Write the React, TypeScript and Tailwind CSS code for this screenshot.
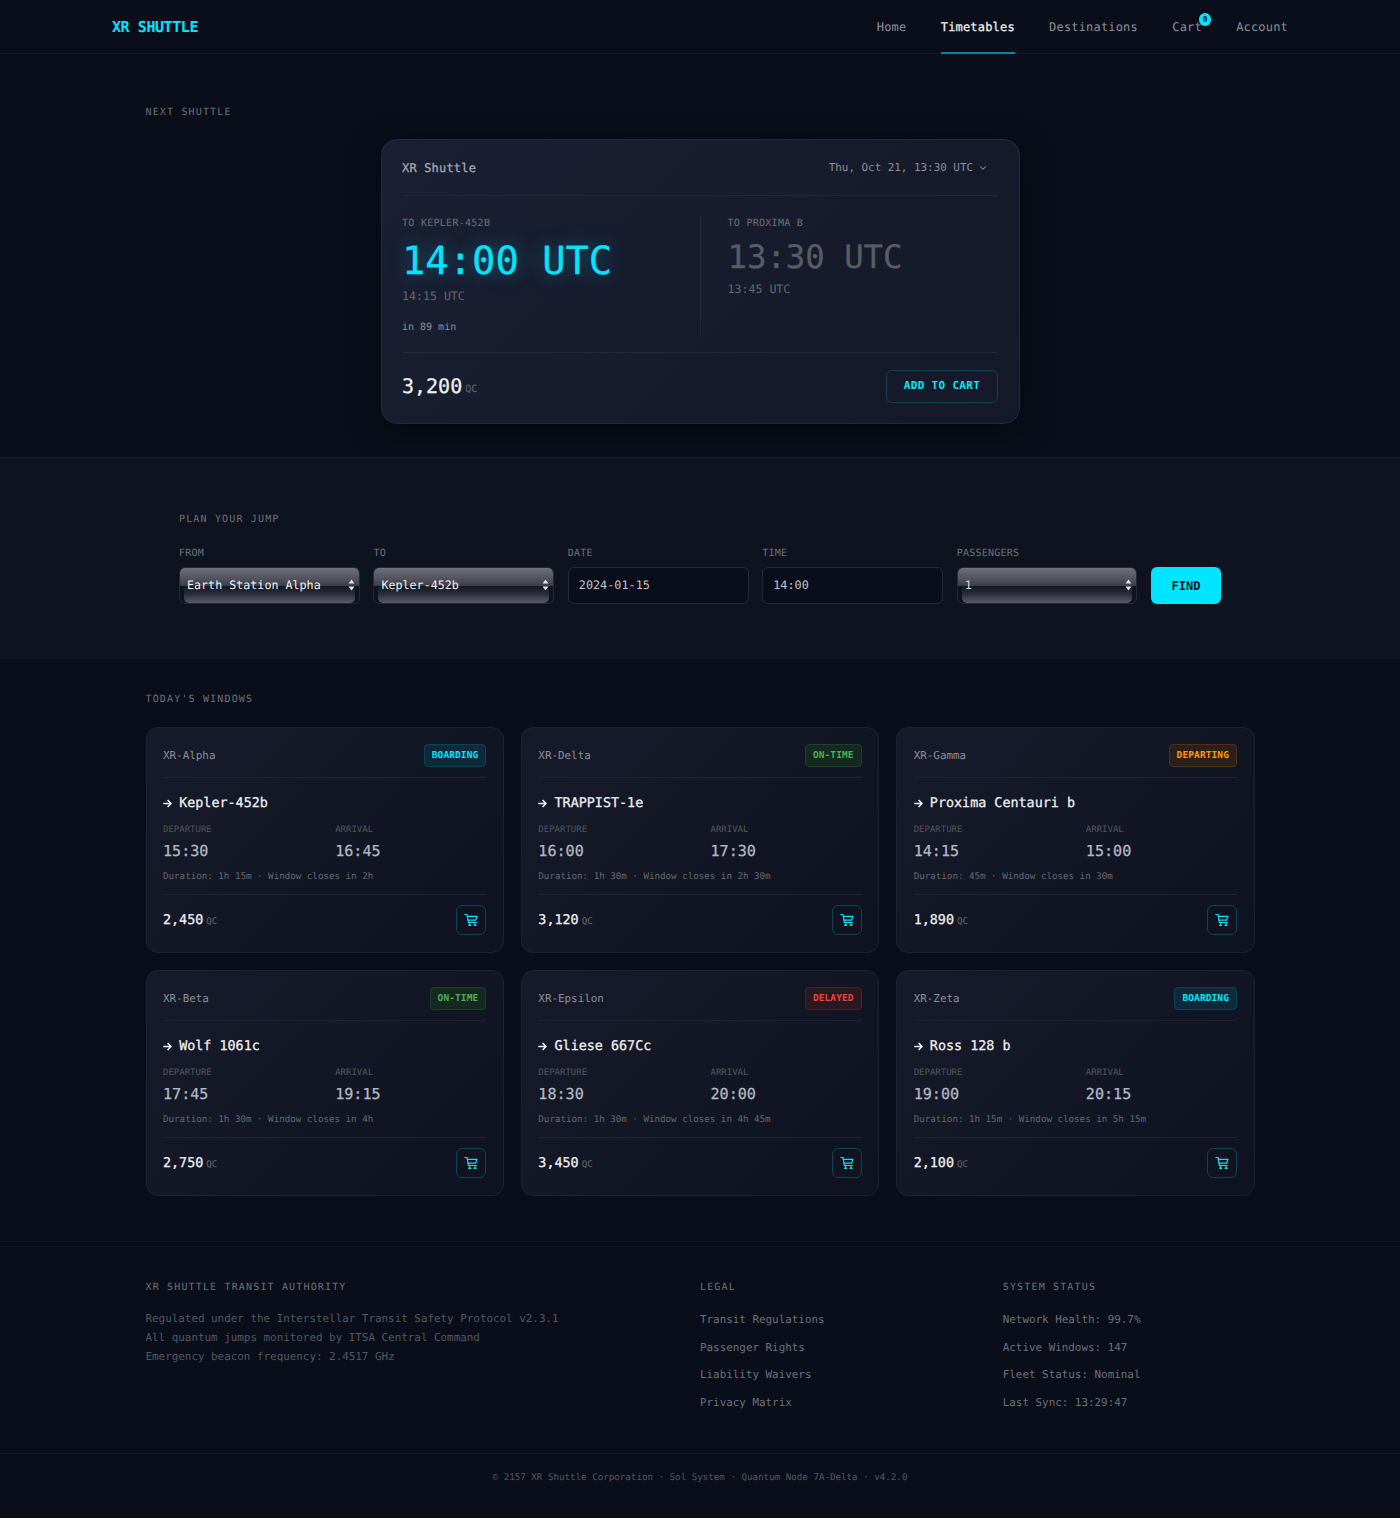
import React from "react";
import { ChevronDown } from "lucide-react";

const FONT = "font-['DejaVu_Sans_Mono',monospace] [text-rendering:geometricPrecision]";
const MEDIUM = "[-webkit-text-stroke:0.25px_currentColor]";

function FieldLabel({ children }: { children: React.ReactNode }) {
  return <div className="mb-[7px] h-[12px] text-[10px] leading-[12px] tracking-[0.25px] text-[#6e7079]">{children}</div>;
}

function Field({ label, value }: { label: string; value: string }) {
  return (
    <div className="flex-1 min-w-0">
      <FieldLabel>{label}</FieldLabel>
      <div className="flex h-[37px] items-center rounded-[6px] border border-[#252a3a] bg-[#0a0e1a] px-[10px] pt-[1px] text-[11.8px] text-[#c0c3cb]">{value}</div>
    </div>
  );
}

function GlossSelect({ label, value, compact }: { label: string; value: string; compact?: boolean }) {
  return (
    <div className="flex-1 min-w-0">
      <FieldLabel>{label}</FieldLabel>
      <div className="relative h-[37px] overflow-hidden rounded-[6px] border border-[#252a3a] bg-[#0f1320]">
        <div className="absolute inset-x-0 top-0 h-[18px] bg-[linear-gradient(#70717a,#3b3d48)]" />
        <div className="absolute inset-x-[4px] bottom-0 top-[18px] rounded-b-[5px] bg-[linear-gradient(#14161f,#2c2e39_50%,#5b5c67)]" />
        <div className={`absolute inset-x-0 top-[8px] flex h-[17px] items-center justify-between pl-[7px] pr-[4px] pt-[1px] text-[11.7px] leading-[17px] ${compact ? "text-[#d8dbe0]" : "text-[#f0f1f4]"}`}>
          <span>{value}</span>
          <svg width="7" height="12" viewBox="0 0 7 12"><path d="M3.5 0.5 6.5 4.5H0.5ZM3.5 11.5 0.5 7.5H6.5Z" fill="#e4e5e9" /></svg>
        </div>
      </div>
    </div>
  );
}

function CartIcon() {
  return (
    <svg width="14" height="14" viewBox="0 0 14 14" fill="none" stroke="currentColor" strokeWidth="1.2" strokeLinecap="square" strokeLinejoin="miter">
      <path d="M1 1.5H3L4.4 9.5H12.2" />
      <path d="M3.4 3.3H12.8L11.7 7.2H4.1" />
      <path d="M5 12.3H6.2M10.4 12.3H11.6" strokeWidth="1.6" />
      <path d="M5.6 9.5V11.5M11 9.5V11.5" strokeWidth="1" />
    </svg>
  );
}

const cards = [
  { name: "XR-Alpha", status: "BOARDING", tone: "cyan", dest: "Kepler-452b", dep: "15:30", arr: "16:45", note: "Duration: 1h 15m · Window closes in 2h", price: "2,450" },
  { name: "XR-Delta", status: "ON-TIME", tone: "green", dest: "TRAPPIST-1e", dep: "16:00", arr: "17:30", note: "Duration: 1h 30m · Window closes in 2h 30m", price: "3,120" },
  { name: "XR-Gamma", status: "DEPARTING", tone: "orange", dest: "Proxima Centauri b", dep: "14:15", arr: "15:00", note: "Duration: 45m · Window closes in 30m", price: "1,890" },
  { name: "XR-Beta", status: "ON-TIME", tone: "green", dest: "Wolf 1061c", dep: "17:45", arr: "19:15", note: "Duration: 1h 30m · Window closes in 4h", price: "2,750" },
  { name: "XR-Epsilon", status: "DELAYED", tone: "red", dest: "Gliese 667Cc", dep: "18:30", arr: "20:00", note: "Duration: 1h 30m · Window closes in 4h 45m", price: "3,450" },
  { name: "XR-Zeta", status: "BOARDING", tone: "cyan", dest: "Ross 128 b", dep: "19:00", arr: "20:15", note: "Duration: 1h 15m · Window closes in 5h 15m", price: "2,100" },
];

const tones: Record<string, string> = {
  cyan: "text-[#00e5ff] bg-[#0c2a3a] border-[#0e4355]",
  green: "text-[#4caf50] bg-[#14291f] border-[#1e4029]",
  orange: "text-[#ff9800] bg-[#2a2019] border-[#4a3117]",
  red: "text-[#f44336] bg-[#2a1820] border-[#4a1f24]",
};

function Card({ c }: { c: (typeof cards)[number] }) {
  return (
    <div className="h-[226px] rounded-[12px] border border-[#1e2333] bg-[linear-gradient(135deg,#161a2a,#0f1320)] px-[16.5px] pt-[16px]">
      <div className="flex h-[34px] items-start justify-between border-b border-[#1e2333]">
        <span className="mt-[3px] text-[10.9px] leading-[17px] text-[#8d8f98]">{c.name}</span>
        <span className={`flex h-[23px] items-center rounded-[4px] border px-[7px] pt-[1px] text-[9.5px] font-bold tracking-[0.1px] ${tones[c.tone]}`}>{c.status}</span>
      </div>
      <div className={`mt-[16px] flex h-[20px] items-center text-[13.4px] leading-[20px] text-[#f0f1f4] ${MEDIUM}`}>
        <span className="mb-[2px] flex w-[16.2px] shrink-0 items-center">
          <svg width="9" height="9" viewBox="0 0 9 9" fill="none" stroke="currentColor" strokeWidth="1.6"><path d="M0.3 4.5H8M4.6 1 8 4.5 4.6 8" /></svg>
        </span>
        <span>{c.dest}</span>
      </div>
      <div className="mt-[11px] grid grid-cols-2 gap-[21px]">
        <div>
          <div className="text-[9px] leading-[11px] text-[#55575f]">DEPARTURE</div>
          <div className={`mt-[5px] text-[15.1px] leading-[20px] text-[#b6b9c2] ${MEDIUM}`}>{c.dep}</div>
        </div>
        <div>
          <div className="text-[9px] leading-[11px] text-[#55575f]">ARRIVAL</div>
          <div className={`mt-[5px] text-[15.1px] leading-[20px] text-[#b6b9c2] ${MEDIUM}`}>{c.arr}</div>
        </div>
      </div>
      <div className="mt-[9px] text-[9.2px] leading-[13px] text-[#66686f]">{c.note}</div>
      <div className="mt-[11px] h-px bg-[#1e2333]" />
      <div className="mt-[10px] flex h-[30px] items-center justify-between">
        <div className="flex items-baseline gap-[3px] pt-[2px]">
          <span className={`text-[13.4px] text-[#f0f1f4] ${MEDIUM}`}>{c.price}</span>
          <span className="text-[9.2px] text-[#66686f]">QC</span>
        </div>
        <div className="flex h-[30px] w-[30px] items-center justify-center rounded-[6px] border border-[#0e4355] text-[#00e5ff]">
          <CartIcon />
        </div>
      </div>
    </div>
  );
}

export default function App() {
  return (
    <div className={`min-h-[1518px] bg-[#0a0e1a] ${FONT}`}>
      <nav className="flex h-[54px] items-center justify-between border-b border-[#141824] px-[112px]">
        <span className="pt-[1px] text-[15px] font-bold tracking-[-0.43px] text-[#00e5ff]">XR SHUTTLE</span>
        <div className="flex h-full items-center gap-[34.3px] pt-[1px] text-[12px] tracking-[0.18px] text-[#8d8f98]">
          <a>Home</a>
          <a className={`relative flex h-full items-center text-[#f0f1f4] ${MEDIUM}`}>
            Timetables
            <span className="absolute inset-x-0 bottom-[-1px] h-[2px] bg-[#008a9c]" />
          </a>
          <a>Destinations</a>
          <a className="relative">
            Cart
            <span className="absolute right-[-9.5px] top-[-5px] flex h-[13px] w-[12px] items-center justify-center rounded-full bg-[#00e5ff] text-[8px] font-bold text-[#0a0e1a]">0</span>
          </a>
          <a>Account</a>
        </div>
      </nav>

      <section className="h-[403px] px-[145.5px] pt-[52px]">
        <div className="text-[10px] leading-[13px] tracking-[1.16px] text-[#6e7079]">NEXT SHUTTLE</div>
        <div className="mx-auto mt-[20px] h-[285px] w-[639px] rounded-[16px] border border-[#252a3a] bg-[linear-gradient(135deg,#1a1f33,#141828)] px-[20.5px] shadow-[0_8px_32px_rgba(0,0,0,0.4)]">
          <div className="flex h-[56px] items-center justify-between border-b border-[#232839] pt-[1px]">
            <span className={`text-[12px] tracking-[0.18px] text-[#a8abb5] ${MEDIUM}`}>XR Shuttle</span>
            <span className="mr-[10px] flex items-center gap-[5px] text-[10.9px] text-[#8d8f98]">Thu, Oct 21, 13:30 UTC <ChevronDown size={10} strokeWidth={2.5} /></span>
          </div>
          <div className="mt-[20px] flex h-[120px]">
            <div className="w-[298.5px] border-r border-[#232839]">
              <div className="text-[10px] leading-[16px] tracking-[0.28px] text-[#6e7079]">TO KEPLER-452B</div>
              <div className={`mt-[6px] text-[38.8px] leading-[48px] text-[#00e5ff] [text-shadow:0_0_20px_rgba(0,229,255,0.4)] ${MEDIUM}`}>14:00 UTC</div>
              <div className="mt-[2px] text-[11.6px] leading-[16px] text-[#66686f]">14:15 UTC</div>
              <div className="mt-[16px] text-[10px] leading-[16px] text-[#8d8f98]">in 89 min</div>
            </div>
            <div className="pl-[27px]">
              <div className="text-[10px] leading-[16px] tracking-[0.28px] text-[#6e7079]">TO PROXIMA B</div>
              <div className={`mt-[5px] text-[32.3px] leading-[40px] text-[#5a5c65] ${MEDIUM}`}>13:30 UTC</div>
              <div className="mt-[4px] text-[11.6px] leading-[16px] text-[#66686f]">13:45 UTC</div>
            </div>
          </div>
          <div className="mt-[16px] flex h-[69px] items-start justify-between border-t border-[#232839] pt-[17px]">
            <div className="flex h-[33px] items-center gap-[3px] pb-[1px]">
              <span className={`text-[20px] text-[#f0f1f4] ${MEDIUM}`}>3,200</span>
              <span className="mt-[6px] text-[10px] text-[#66686f]">QC</span>
            </div>
            <div className="flex h-[33px] w-[112px] items-center justify-center rounded-[6px] border border-[#0e4355] text-[11px] font-bold tracking-[0.33px] text-[#00e5ff]">ADD TO CART</div>
          </div>
        </div>
      </section>

      <section className="h-[202px] border-t border-[#1a1f2e] bg-[#0f1320] px-[179px] pt-[55px]">
        <div className="text-[10px] leading-[13px] tracking-[1.16px] text-[#6e7079]">PLAN YOUR JUMP</div>
        <div className="mt-[22px] flex items-end gap-[13.6px]">
          <GlossSelect label="FROM" value="Earth Station Alpha" />
          <GlossSelect label="TO" value="Kepler-452b" />
          <Field label="DATE" value="2024-01-15" />
          <Field label="TIME" value="14:00" />
          <GlossSelect label="PASSENGERS" value="1" compact />
          <div className="flex h-[37px] w-[70px] items-center justify-center rounded-[6px] bg-[#00e5ff] text-[12px] font-bold tracking-[0.1px] text-[#0a0e1a]">FIND</div>
        </div>
      </section>

      <section className="px-[145.5px] pt-[34px]">
        <div className="text-[10px] leading-[13px] tracking-[1.16px] text-[#6e7079]">TODAY'S WINDOWS</div>
        <div className="mt-[21px] grid grid-cols-3 gap-[17px]">
          {cards.map((c) => <Card key={c.name} c={c} />)}
        </div>
      </section>

      <footer className="mt-[50px] border-t border-[#141824]">
        <div className="grid h-[206px] grid-cols-[2fr_1fr_1fr] gap-x-[51px] px-[145.5px] pt-[34px]">
          <div>
            <div className="text-[10px] leading-[13px] tracking-[1.16px] text-[#6e7079]">XR SHUTTLE TRANSIT AUTHORITY</div>
            <div className="mt-[15px] text-[10.9px] leading-[19.2px] text-[#55575f]">
              <div>Regulated under the Interstellar Transit Safety Protocol v2.3.1</div>
              <div>All quantum jumps monitored by ITSA Central Command</div>
              <div>Emergency beacon frequency: 2.4517 GHz</div>
            </div>
          </div>
          <div>
            <div className="text-[10px] leading-[13px] tracking-[1.16px] text-[#6e7079]">LEGAL</div>
            <div className="mt-[18px] flex flex-col gap-[11.7px] text-[10.9px] leading-[16px] text-[#6e7079]">
              <span>Transit Regulations</span><span>Passenger Rights</span><span>Liability Waivers</span><span>Privacy Matrix</span>
            </div>
          </div>
          <div>
            <div className="text-[10px] leading-[13px] tracking-[1.16px] text-[#6e7079]">SYSTEM STATUS</div>
            <div className="mt-[18px] flex flex-col gap-[11.7px] text-[10.9px] leading-[16px] text-[#6e7079]">
              <span>Network Health: 99.7%</span><span>Active Windows: 147</span><span>Fleet Status: Nominal</span><span>Last Sync: 13:29:47</span>
            </div>
          </div>
        </div>
        <div className="flex h-[65px] items-start justify-center border-t border-[#141824] pt-[17px] text-[9.2px] leading-[13px] text-[#55575f]">
          © 2157 XR Shuttle Corporation · Sol System · Quantum Node 7A-Delta · v4.2.0
        </div>
      </footer>
    </div>
  );
}
